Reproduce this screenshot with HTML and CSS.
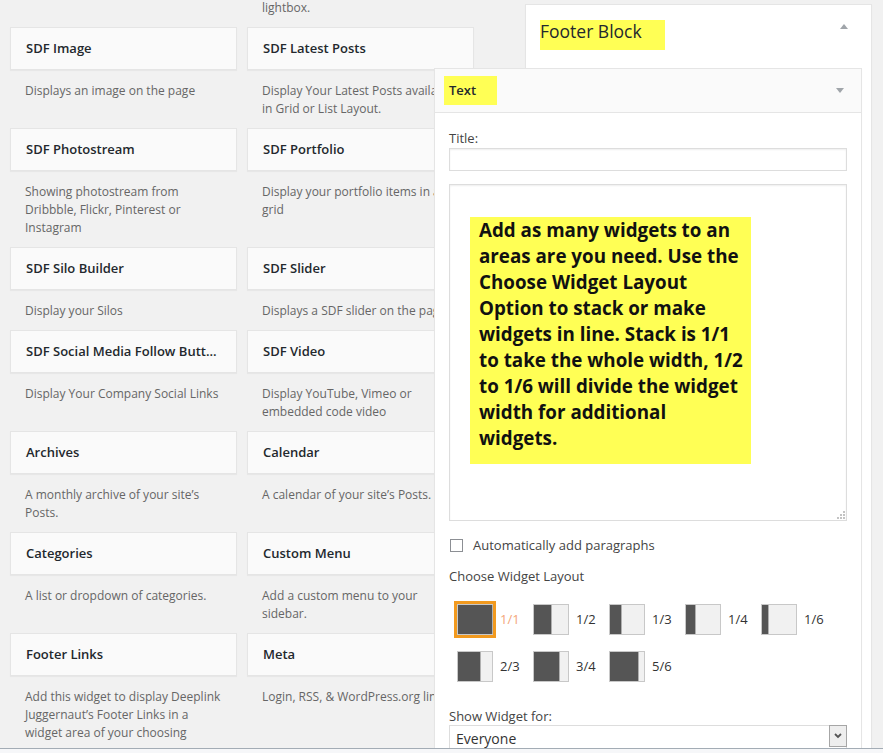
FILE: index.html
```html
<!DOCTYPE html>
<html lang="en">
<head>
    <meta charset="UTF-8">
    <meta name="viewport" content="width=device-width, initial-scale=1.0">
    <title>Widgets</title>
    <link rel="stylesheet" href="styles.css">
</head>
<body>
    <div class="screen">
        <div class="widget-list">
            <div class="widget"><p class="widget-desc first">&nbsp;</p></div>
            <div class="widget"><p class="widget-desc first">lightbox.</p></div>

            <div class="widget">
                <div class="widget-title">SDF Image</div>
                <p class="widget-desc">Displays an image on the page</p>
            </div>
            <div class="widget">
                <div class="widget-title">SDF Latest Posts</div>
                <p class="widget-desc">Display Your Latest Posts available in Grid or List Layout.</p>
            </div>

            <div class="widget">
                <div class="widget-title">SDF Photostream</div>
                <p class="widget-desc">Showing photostream from Dribbble, Flickr, Pinterest or Instagram</p>
            </div>
            <div class="widget">
                <div class="widget-title">SDF Portfolio</div>
                <p class="widget-desc">Display your portfolio items in a grid</p>
            </div>

            <div class="widget">
                <div class="widget-title">SDF Silo Builder</div>
                <p class="widget-desc">Display your Silos</p>
            </div>
            <div class="widget">
                <div class="widget-title">SDF Slider</div>
                <p class="widget-desc">Displays a SDF slider on the page</p>
            </div>

            <div class="widget">
                <div class="widget-title">SDF Social Media Follow Butt...</div>
                <p class="widget-desc">Display Your Company Social Links</p>
            </div>
            <div class="widget">
                <div class="widget-title">SDF Video</div>
                <p class="widget-desc">Display YouTube, Vimeo or embedded code video</p>
            </div>

            <div class="widget">
                <div class="widget-title">Archives</div>
                <p class="widget-desc">A monthly archive of your site’s Posts.</p>
            </div>
            <div class="widget">
                <div class="widget-title">Calendar</div>
                <p class="widget-desc">A calendar of your site’s Posts.</p>
            </div>

            <div class="widget">
                <div class="widget-title">Categories</div>
                <p class="widget-desc">A list or dropdown of categories.</p>
            </div>
            <div class="widget">
                <div class="widget-title">Custom Menu</div>
                <p class="widget-desc">Add a custom menu to your sidebar.</p>
            </div>

            <div class="widget">
                <div class="widget-title">Footer Links</div>
                <p class="widget-desc">Add this widget to display Deeplink Juggernaut’s Footer Links in a widget area of your choosing</p>
            </div>
            <div class="widget">
                <div class="widget-title">Meta</div>
                <p class="widget-desc nowrap">Login, RSS, &amp; WordPress.org links.</p>
            </div>
        </div>

        <div class="sidebar">
            <div class="sidebar-name">
                <h2><span class="mark">Footer Block</span></h2>
                <svg class="toggle" width="8" height="5" viewBox="0 0 8 5"><path d="M0 5 L4 0 L8 5 Z" fill="#a0a5aa"/></svg>
            </div>

            <div class="panel">
                <div class="panel-head">
                    <h3><span class="mark">Text</span></h3>
                    <svg class="toggle" width="8" height="5" viewBox="0 0 8 5"><path d="M0 0 L8 0 L4 5 Z" fill="#a0a5aa"/></svg>
                </div>

                <div class="panel-body">
                    <label class="field-label">Title:</label>
                    <div class="input"></div>

                    <div class="textarea">
                        <div class="note">Add as many widgets to an<br>areas are you need. Use the<br>Choose Widget Layout<br>Option to stack or make<br>widgets in line. Stack is 1/1<br>to take the whole width, 1/2<br>to 1/6 will divide the widget<br>width for additional<br>widgets.</div>
                        <svg class="grip" width="9" height="9" viewBox="0 0 9 9">
                            <rect x="7" y="1" width="2" height="2" fill="#c3c3c3"/>
                            <rect x="4" y="4" width="2" height="2" fill="#c3c3c3"/>
                            <rect x="7" y="4" width="2" height="2" fill="#c3c3c3"/>
                            <rect x="1" y="7" width="2" height="2" fill="#c3c3c3"/>
                            <rect x="4" y="7" width="2" height="2" fill="#c3c3c3"/>
                            <rect x="7" y="7" width="2" height="2" fill="#c3c3c3"/>
                        </svg>
                    </div>

                    <div class="check-row">
                        <span class="checkbox"></span>
                        <span>Automatically add paragraphs</span>
                    </div>

                    <p class="section-label">Choose Widget Layout</p>

                    <div class="layouts">
                        <div class="layout selected">
                            <span class="lay-icon"><span class="lay-fill w-1"></span></span>
                            <span class="lay-label">1/1</span>
                        </div>
                        <div class="layout">
                            <span class="lay-icon"><span class="lay-fill w-1-2"></span></span>
                            <span class="lay-label">1/2</span>
                        </div>
                        <div class="layout">
                            <span class="lay-icon"><span class="lay-fill w-1-3"></span></span>
                            <span class="lay-label">1/3</span>
                        </div>
                        <div class="layout">
                            <span class="lay-icon"><span class="lay-fill w-1-4"></span></span>
                            <span class="lay-label">1/4</span>
                        </div>
                        <div class="layout">
                            <span class="lay-icon"><span class="lay-fill w-1-6"></span></span>
                            <span class="lay-label">1/6</span>
                        </div>
                        <div class="layout">
                            <span class="lay-icon"><span class="lay-fill w-2-3"></span></span>
                            <span class="lay-label">2/3</span>
                        </div>
                        <div class="layout">
                            <span class="lay-icon"><span class="lay-fill w-3-4"></span></span>
                            <span class="lay-label">3/4</span>
                        </div>
                        <div class="layout">
                            <span class="lay-icon"><span class="lay-fill w-5-6"></span></span>
                            <span class="lay-label">5/6</span>
                        </div>
                    </div>

                    <p class="section-label show-label">Show Widget for:</p>
                    <div class="select">
                        <span class="select-value">Everyone</span>
                        <span class="select-arrow">
                            <svg width="8" height="6" viewBox="0 0 8 6"><path d="M1 1 L4 4 L7 1" fill="none" stroke="#555" stroke-width="1.8"/></svg>
                        </span>
                    </div>
                </div>
            </div>
        </div>
    </div>
    <div class="bottom-bar"></div>
</body>
</html>
```

FILE: styles.css
```css
* { margin: 0; padding: 0; box-sizing: border-box; }

body {
    font-family: "Open Sans", "Noto Sans", Arial, sans-serif;
    font-size: 13px;
    color: #444;
    background: #f1f1f1;
}

.screen {
    display: flex;
    align-items: flex-start;
    height: 748px;
    overflow: hidden;
}

.widget-list {
    display: grid;
    grid-template-columns: 227px 227px;
    column-gap: 10px;
    align-items: start;
    margin-left: 10px;
    margin-top: -1px;
    flex-shrink: 0;
}

.widget-title {
    height: 43px;
    padding: 0 15px;
    background: #fafafa;
    border: 1px solid #e5e5e5;
    box-shadow: 0 1px 1px rgba(0, 0, 0, 0.04);
    font-size: 13px;
    font-weight: 600;
    line-height: 41px;
    color: #23282d;
    white-space: nowrap;
    overflow: hidden;
}

.widget-desc {
    padding: 12px 15px 10px;
    font-size: 12px;
    line-height: 18px;
    color: #666;
}

.widget-desc.first {
    padding-top: 0;
}

.widget-desc.nowrap {
    white-space: nowrap;
}

.sidebar {
    position: relative;
    z-index: 1;
    flex-shrink: 0;
    width: 347px;
    height: 800px;
    margin-top: 4px;
    margin-left: 51px;
    background: #fff;
    border: 1px solid #e5e5e5;
    box-shadow: 0 1px 1px rgba(0, 0, 0, 0.04);
}

.sidebar-name {
    display: flex;
    justify-content: space-between;
    height: 63px;
    padding: 14px 23px 0 14px;
}

.sidebar-name h2 {
    font-size: 17.5px;
    font-weight: 400;
    color: #23282d;
}

.sidebar-name .mark {
    display: inline-block;
    width: 125px;
    height: 30px;
    padding-bottom: 8px;
    line-height: 22px;
}

.sidebar-name .toggle {
    margin-top: 5px;
}

.mark {
    background: #ffff55;
}

.panel {
    width: 428px;
    margin-left: -92px;
    background: #fff;
    border: 1px solid #e5e5e5;
    box-shadow: 0 1px 1px rgba(0, 0, 0, 0.04);
}

.panel-head {
    display: flex;
    justify-content: space-between;
    align-items: center;
    height: 44px;
    padding: 0 17px 0 9px;
    background: #fafafa;
    border-bottom: 1px solid #e5e5e5;
}

.panel-head h3 {
    font-size: 13px;
    font-weight: 600;
    color: #23282d;
}

.panel-head .mark {
    display: inline-block;
    width: 53px;
    height: 29px;
    padding-left: 5px;
    line-height: 29px;
}

.panel-body {
    padding: 16px 14px 0;
}

.field-label {
    display: block;
    line-height: 18px;
    color: #444;
}

.input {
    height: 23px;
    margin-top: 1px;
    border: 1px solid #ddd;
    box-shadow: inset 0 1px 2px rgba(0, 0, 0, 0.07);
}

.textarea {
    position: relative;
    height: 337px;
    margin-top: 13px;
    padding: 32px 0 0 20px;
    border: 1px solid #ddd;
    box-shadow: inset 0 1px 2px rgba(0, 0, 0, 0.07);
}

.note {
    width: 281px;
    padding: 0 9px 13px;
    background: #ffff55;
    font-size: 18.8px;
    font-weight: 700;
    line-height: 26px;
    color: #111;
    white-space: nowrap;
}

.grip {
    position: absolute;
    right: 1px;
    bottom: 1px;
}

.check-row {
    display: flex;
    align-items: center;
    gap: 10px;
    margin-top: 15px;
    line-height: 18px;
    color: #444;
}

.checkbox {
    width: 13px;
    height: 13px;
    margin-left: 1px;
    border: 1px solid #8c8f94;
    background: #fff;
}

.section-label {
    margin-top: 13px;
    line-height: 18px;
    color: #444;
}

.layouts {
    display: grid;
    grid-template-columns: repeat(5, 76px);
    row-gap: 10px;
    margin-top: 16px;
    margin-left: 5px;
}

.layout {
    display: flex;
    align-items: center;
}

.lay-icon {
    display: flex;
    width: 42px;
    height: 37px;
    border: 3px solid transparent;
    background: #f1f1f1;
    background-clip: content-box;
    box-shadow: inset 0 0 0 1px #c8c8c8;
    padding: 1px;
}

.layout.selected .lay-icon {
    border-color: #f29a1f;
}

.lay-fill {
    height: 100%;
    background: #555;
    box-shadow: 1px 0 0 #b0b0b0;
}

.w-1 { width: 100%; }
.w-1-2 { width: 50%; }
.w-1-3 { width: 33%; }
.w-1-4 { width: 26%; }
.w-1-6 { width: 18%; }
.w-2-3 { width: 65%; }
.w-3-4 { width: 74%; }
.w-5-6 { width: 82%; }

.lay-label {
    margin-left: 4px;
    margin-top: -1px;
    color: #333;
}

.layout.selected .lay-label {
    color: #f4a67a;
}

.show-label {
    margin-top: 22px;
}

.select {
    display: flex;
    justify-content: space-between;
    height: 30px;
    margin-top: 0;
    border: 1px solid #ddd;
}

.select-value {
    padding-left: 6px;
    font-size: 14px;
    line-height: 26px;
    color: #333;
}

.select-arrow {
    display: flex;
    align-items: center;
    justify-content: center;
    width: 18px;
    height: 22px;
    margin: -1px -1px 0 0;
    background: #eee;
    border: 1px solid #a6a6a6;
}

.bottom-bar {
    height: 5px;
    background: #f6f7f9;
    border-top: 1px solid #a3acb5;
}
```
